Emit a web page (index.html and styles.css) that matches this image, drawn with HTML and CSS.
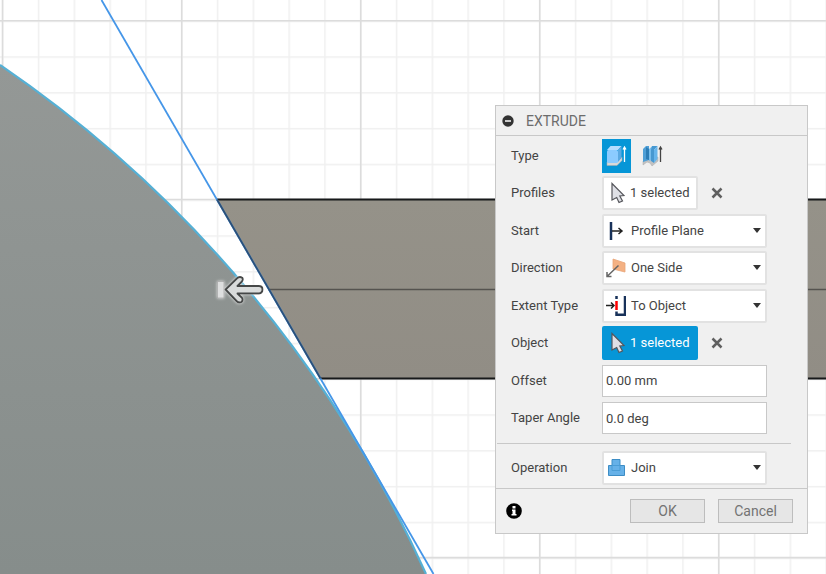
FILE: index.html
```html
<!DOCTYPE html>
<html lang="en">
<head>
<meta charset="utf-8">
<title>Extrude</title>
<link rel="stylesheet" href="styles.css">
</head>
<body>
<main class="workspace">
  <svg class="canvas" viewBox="0 0 826 574" preserveAspectRatio="xMinYMin slice" aria-hidden="true">
    <defs>
      <pattern id="minor" x="2" y="20.5" width="35.8" height="35.8" patternUnits="userSpaceOnUse">
        <path d="M0 .75H35.8M.75 0V35.8" stroke="#f0f0f0" stroke-width="1.5"/>
      </pattern>
      <linearGradient id="disc" x1="0" y1="0" x2="0" y2="1"><stop offset="0" stop-color="#949896"/><stop offset="1" stop-color="#868d8b"/></linearGradient>
      <linearGradient id="bar" x1="0" y1="0" x2="0" y2="1"><stop offset="0" stop-color="#959289"/><stop offset="1" stop-color="#918d85"/></linearGradient>
      <filter id="glow" x="-30%" y="-30%" width="160%" height="160%"><feDropShadow dx="0" dy="0" stdDeviation="1.5" flood-color="#fff" flood-opacity=".8"/></filter>
    </defs>
    <rect width="826" height="574" fill="#fff"/>
    <rect width="826" height="574" fill="url(#minor)"/>
    <path d="M2.5 0V574M181.7 0V574M360.7 0V574M539.7 0V574M718.7 0V574M0 20.8H826M0 199.5H826M0 378.8H826M0 557.6H826" stroke="#dcdcdc" stroke-width="1.6"/>
    <path d="M217 199.5H826V379H320.5Z" fill="url(#bar)"/>
    <path d="M268 289.5H826" stroke="#55534f" stroke-width="1.5"/>
    <path d="M217 199.5H826M320 378.5H826" stroke="#17191a" stroke-width="1.8"/>
    <path d="M0 65A1225 1225 0 0 1 426 574H0Z" fill="url(#disc)"/>
    <path d="M0 65A1225 1225 0 0 1 426 574" fill="none" stroke="#55b0d5" stroke-width="2.2"/>
    <path d="M101.500 0L433.500 574" stroke="#4596e8" stroke-width="1.8"/>
    <path d="M217 199.500L320.500 378.500" stroke="#2c5078" stroke-width="1.8"/>
    <g filter="url(#glow)" stroke-linejoin="round">
      <path d="M217.500 281.500H224V298H217.500Z" fill="#dedfdf" stroke="#999" stroke-width=".6"/>
      <path d="M225.500 289.500L237 278.200Q240 276 242.500 278Q243.500 280 241.500 282L237.500 286H259Q262.500 286 262.500 289.500T259 293.500H237.500L242 297.800Q243.500 300 241.500 302Q239 303.500 236.500 301Z" fill="#d9dbdb" stroke="#454747" stroke-width="1.9"/>
    </g>
  </svg>

  <form class="dialog" aria-label="Extrude">
    <header class="title">
      <button class="plain" type="button" aria-label="Collapse"><svg width="12" height="12" viewBox="0 0 12 12"><circle cx="6" cy="6" r="5.700" fill="#333"/><path d="M3 6H9" stroke="#fff" stroke-width="1.500"/></svg></button>
      <h1>EXTRUDE</h1>
    </header>

    <div class="fields">
      <div class="row">
        <span class="label">Type</span>
        <div class="types">
          <button class="type active" type="button" aria-label="Solid extrude"><svg width="21" height="22" viewBox="0 0 21 22"><path d="M1 17V20.500H11L16 15.500V12L11 17Z" fill="#d9d9d9" stroke="#aaa" stroke-width=".5"/><path d="M1 5L4.500 1H15.500L12 5Z" fill="#b5ddff"/><path d="M12 5L15.500 1V13L12 17Z" fill="#5aa9e2"/><rect x="1" y="5" width="11" height="13" rx="1.500" fill="#8bcbff"/><path d="M18.500 17V3M17 4.500L18.500 2L20 4.500" fill="none" stroke="#fff" stroke-width="1.300"/></svg></button>
          <button class="type" type="button" aria-label="Thin extrude"><svg width="21" height="22" viewBox="0 0 21 22"><path d="M1 16V20L5 17L8 18L10 21L16 16V12Z" fill="#c2c2c2" stroke="#aaa" stroke-width=".5"/><path d="M1 4L4 1H7V15L1 17Z" fill="#4f9fd6"/><path d="M4 2L7 4V15L4 14Z" fill="#2c7db6"/><path d="M7 4L10 1.500V15L7 16Z" fill="#77bdec"/><path d="M10 1H15.500L12 5V18L9 16V5Z" fill="#4698d1"/><path d="M12 5L15.500 1V14L12 18Z" fill="#66b5ec"/><path d="M18.500 17V3M17 4.500L18.500 2L20 4.500" fill="none" stroke="#444" stroke-width="1.300"/></svg></button>
        </div>
      </div>
      <div class="row">
        <span class="label">Profiles</span>
        <div class="picker">
          <button class="pick" type="button"><svg width="15" height="22" viewBox="0 0 15 22"><path d="M2 1.500L14 13.500L9.800 14L12.500 19L9 20.500L6.700 15.500L2 18Z" fill="#dedfe5" stroke="#55565b" stroke-width="1.200"/></svg>1 selected</button>
          <button class="plain" type="button" aria-label="Clear profiles"><svg width="12" height="12" viewBox="0 0 12 12"><path d="M1.500 1.500L10.500 10.500M10.500 1.500L1.500 10.500" stroke="#606060" stroke-width="2.500"/></svg></button>
        </div>
      </div>
      <div class="row">
        <label class="label" for="start">Start</label>
        <div class="choice"><select id="start"><option>Profile Plane</option></select><svg class="icon" width="20" height="20" viewBox="0 0 20 20"><path d="M5 1V19" stroke="#18325a" stroke-width="2.500"/><path d="M6 10H16M12.500 7L16 10L12.500 13" fill="none" stroke="#222" stroke-width="1.500"/></svg></div>
      </div>
      <div class="row">
        <label class="label" for="direction">Direction</label>
        <div class="choice"><select id="direction"><option>One Side</option></select><svg class="icon" width="20" height="20" viewBox="0 0 20 20"><path d="M7 1L19 5V14L7 11Z" fill="#f4b183" stroke="#e8a477" stroke-width=".8"/><path d="M12.500 7.500L1.500 18M1 14V18.500H5.500" fill="none" stroke="#666" stroke-width="1.500"/></svg></div>
      </div>
      <div class="row">
        <label class="label" for="extent">Extent Type</label>
        <div class="choice"><select id="extent"><option>To Object</option></select><svg class="icon" width="20" height="20" viewBox="0 0 20 20"><path d="M10.500 0V3M10.500 15.500V18.700H19V0" fill="none" stroke="#18325a" stroke-width="2.500"/><path d="M10.500 5V14" stroke="#f00" stroke-width="2.500"/><path d="M0 9.500H8M5 6.500L8 9.500L5 12.500" fill="none" stroke="#222" stroke-width="1.500"/></svg></div>
      </div>
      <div class="row">
        <span class="label">Object</span>
        <div class="picker">
          <button class="pick active" type="button"><svg width="15" height="22" viewBox="0 0 15 22"><path d="M2 1.500L14 13.500L9.800 14L12.500 19L9 20.500L6.700 15.500L2 18Z" fill="#dedfe5" stroke="#55565b" stroke-width="1.200"/></svg>1 selected</button>
          <button class="plain" type="button" aria-label="Clear object"><svg width="12" height="12" viewBox="0 0 12 12"><path d="M1.500 1.500L10.500 10.500M10.500 1.500L1.500 10.500" stroke="#606060" stroke-width="2.500"/></svg></button>
        </div>
      </div>
      <div class="row">
        <label class="label" for="offset">Offset</label>
        <input id="offset" type="text" value="0.00 mm">
      </div>
      <div class="row">
        <label class="label" for="taper">Taper Angle</label>
        <input id="taper" type="text" value="0.0 deg">
      </div>
    </div>

    <div class="operation">
      <div class="row">
        <label class="label" for="operation">Operation</label>
        <div class="choice"><select id="operation"><option>Join</option></select><svg class="icon" width="20" height="20" viewBox="0 0 20 20"><path d="M6 1.500H14V7.500H18.500V17.500H2.500V7.500H6Z" fill="#66b1e8" stroke="#3d8dc5"/><path d="M6 7.500V12.500H14V7.500Z" fill="none" stroke="#4b9dd6"/></svg></div>
      </div>
    </div>

    <footer class="actions">
      <button class="plain info" type="button" aria-label="Information"><svg width="16" height="16" viewBox="0 0 16 16"><circle cx="8" cy="8" r="7.800" fill="#000"/><path d="M6.500 3H9.500V5.500H6.500ZM6 6.500H9.500V11H10.500V12.500H5.500V11H6.500V8H6Z" fill="#fff"/></svg></button>
      <button class="action" type="submit">OK</button>
      <button class="action" type="button">Cancel</button>
    </footer>
  </form>
</main>
</body>
</html>
```
FILE: styles.css
```css
* {
  box-sizing: border-box;
}

body {
  margin: 0;
  color: #444;
  font: 13px/16px Roboto, "Liberation Sans", sans-serif;
}

.workspace {
  position: relative;
  min-height: 100vh;
  overflow: hidden;
}

.canvas {
  position: absolute;
  inset: 0;
  width: 100%;
  height: 100%;
}

/* Floating tool dialog */
.dialog {
  position: absolute;
  top: 105px;
  right: 18px;
  width: 313px;
  border: 1px solid #c8c8c8;
  background: #f0f0f0;
}

button,
input,
select {
  margin: 0;
  color: inherit;
  font: inherit;
}

svg {
  display: block;
}

.plain {
  padding: 0;
  border: 0;
  background: none;
}

.title {
  display: flex;
  align-items: center;
  gap: 12px;
  height: 30px;
  padding-left: 6px;
  border-bottom: 1px solid #c8c8c8;
}

.title h1 {
  margin: 0;
  color: #6c6c6c;
  font-size: 14px;
  font-weight: 400;
}

.fields {
  display: grid;
  grid-auto-rows: 1fr;
  min-height: 301px;
  padding-top: 1px;
}

.row {
  display: grid;
  grid-template-columns: 91px 165px;
  align-items: center;
  padding-left: 15px;
}

.types {
  display: flex;
  gap: 7px;
}

.type {
  display: grid;
  place-items: center;
  width: 29px;
  height: 34px;
  padding: 0;
  border: 0;
  background: none;
}

.type.active {
  background: #0696d7;
}

.picker {
  display: flex;
  align-items: center;
  gap: 13px;
}

.pick {
  display: flex;
  align-items: center;
  gap: 5px;
  height: 34px;
  padding: 0 7px 0 6px;
  border: 2px solid #e2e2e2;
  border-radius: 2px;
  background: #fff;
}

.pick.active {
  border-color: #0696d7;
  background: #0696d7;
  color: #fff;
}

.choice {
  position: relative;
}

.choice::after {
  content: "";
  position: absolute;
  top: 14px;
  right: 6px;
  border: 4px solid transparent;
  border-top: 5px solid #333;
  border-bottom: 0;
}

.choice .icon {
  position: absolute;
  top: 7px;
  left: 4px;
}

select {
  display: block;
  width: 100%;
  height: 34px;
  padding: 0 20px 0 27px;
  border: 2px solid #e2e2e2;
  border-radius: 2px;
  appearance: none;
  background: #fff;
}

input {
  width: 100%;
  height: 32px;
  padding: 0 3px;
  border: 1px solid #c8c8c8;
  background: #fff;
}

.operation {
  padding: 6px 0 3px;
  border-bottom: 1px solid #c8c8c8;
}

.operation::before {
  content: "";
  display: block;
  margin: 0 16px 7px 1px;
  border-top: 1px solid #c8c8c8;
}

.actions {
  display: flex;
  align-items: center;
  gap: 13px;
  height: 44px;
  padding: 0 14px 0 10px;
}

.info {
  margin-right: auto;
}

.action {
  width: 75px;
  height: 24px;
  padding: 0;
  border: 1px solid #bdbdbd;
  background: #e6e6e6;
  color: #737373;
  font-size: 14px;
}
```
